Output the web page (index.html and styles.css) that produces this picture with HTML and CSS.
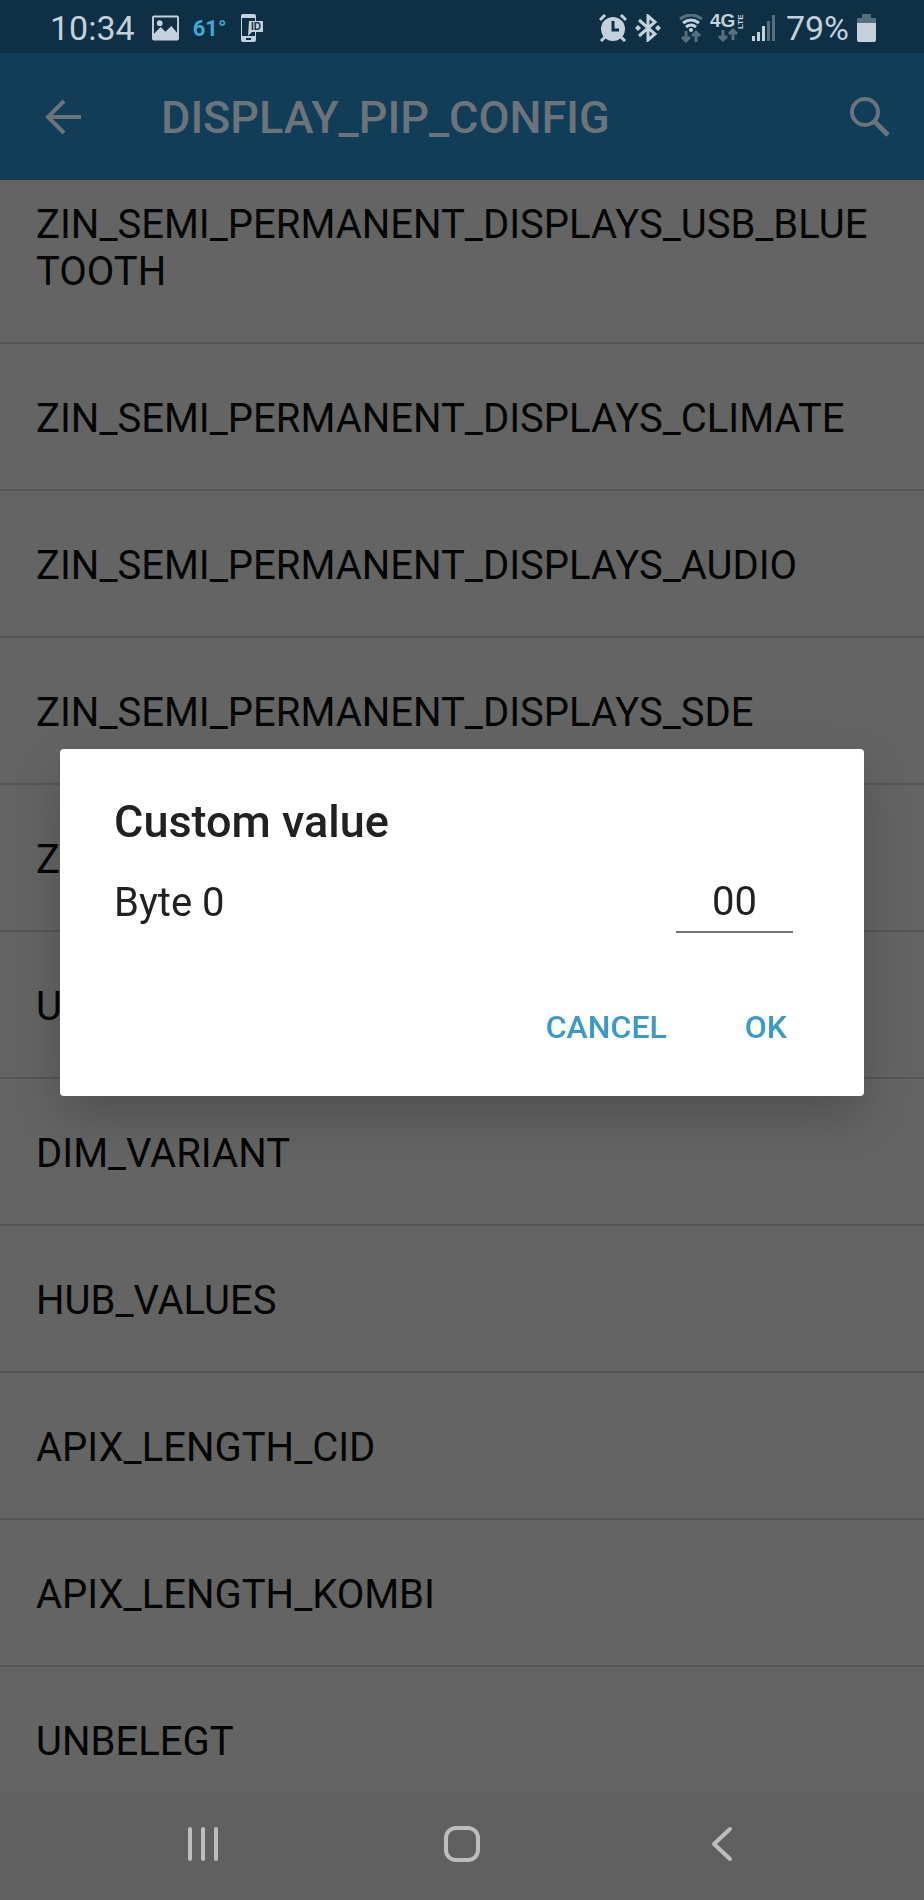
FILE: index.html
```html
<!DOCTYPE html>
<html lang="en">
<head>
  <meta charset="UTF-8">
  <meta name="viewport" content="width=device-width, initial-scale=1.0">
  <title>DISPLAY_PIP_CONFIG</title>
  <link rel="stylesheet" href="styles.css">
</head>
<body>
  <div class="screen">
    <div class="status-bar">
      <div class="status-left">
        <span class="clock">10:34</span>
        <svg class="icon-picture" width="27" height="26" viewBox="0 0 28 26">
          <path fill="currentColor" fill-rule="evenodd" d="M2 0h24a2 2 0 0 1 2 2v22a2 2 0 0 1-2 2H2a2 2 0 0 1-2-2V2a2 2 0 0 1 2-2zm0 2v17l7-7 5 5 6-6 6 7V2zm6 3a3 3 0 1 1 0 6 3 3 0 0 1 0-6z"/>
        </svg>
        <span class="temp">61°</span>
        <svg width="22" height="28" viewBox="0 0 22 28">
          <path fill="currentColor" fill-rule="evenodd" d="M2 0h11a2 2 0 0 1 2 2v24a2 2 0 0 1-2 2H2a2 2 0 0 1-2-2V2a2 2 0 0 1 2-2zm-1 4v18h13V4zm4 20v2h5v-2z"/>
          <path fill="currentColor" d="M8 7h14v11H11l-4 4z"/>
          <text class="icon-text" x="10" y="16" font-size="10" fill="#0f3044">ID</text>
        </svg>
      </div>
      <div class="status-right">
        <svg width="28" height="28" viewBox="0 0 28 28">
          <circle cx="14" cy="15" r="12" fill="currentColor"/>
          <path fill="none" stroke="currentColor" stroke-width="3" d="M1 6l5-5M22 1l5 5M6 23l-4 4M22 23l4 4"/>
          <path fill="none" stroke="#0f3044" stroke-width="3" d="M14 7v9h6"/>
        </svg>
        <svg class="icon-bluetooth" width="26" height="28" viewBox="0 0 26 28">
          <path fill="none" stroke="currentColor" stroke-width="3" d="M4 6l16 14-7 6V2l7 6L4 22"/>
          <path fill="currentColor" d="M0 14l3-3 3 3-3 3zM20 14l3-3 3 3-3 3z"/>
        </svg>
        <svg width="24" height="29" viewBox="0 0 24 29">
          <path class="dim" fill="none" stroke="currentColor" stroke-width="3" d="M1 5q11-8 22 0"/>
          <path fill="none" stroke="currentColor" stroke-width="3" d="M4 9q8-6 16 0M7 13q5-4 10 0"/>
          <circle cx="12" cy="16" r="2" fill="currentColor"/>
          <path class="dim" fill="none" stroke="currentColor" stroke-width="3" d="M7 17v9M3 23l4 4 4-4M17 28v-9M13 22l4-4 4 4"/>
        </svg>
        <svg class="icon-4g" width="36" height="40" viewBox="0 -6 36 40">
          <text class="icon-text" x="0" y="13" font-size="19" fill="currentColor">4G</text>
          <text class="icon-text" transform="translate(33 15) rotate(-90)" font-size="8" fill="currentColor">LTE</text>
          <path class="dim" fill="none" stroke="currentColor" stroke-width="3" d="M13 16v9M9 22l4 4 4-4M23 26v-9M19 20l4-4 4 4"/>
        </svg>
        <svg width="24" height="26" viewBox="0 0 24 26">
          <path fill="currentColor" d="M0 21h3v5H0zM5 17h3v9H5zM10 11h3v15h-3z"/>
          <path class="dim" fill="currentColor" d="M15 6h3v20h-3zM20 0h3v26h-3z"/>
        </svg>
        <span class="percent">79%</span>
        <svg width="19" height="28" viewBox="0 0 19 28">
          <path class="dim" fill="currentColor" d="M5 0h9v4h5v5H0V4h5z"/>
          <path fill="currentColor" d="M0 9h19v17a2 2 0 0 1-2 2H2a2 2 0 0 1-2-2z"/>
        </svg>
      </div>
    </div>

    <header class="app-bar">
      <button class="icon-button" aria-label="Back">
        <svg width="36" height="36" viewBox="0 0 36 36">
          <path fill="none" stroke="currentColor" stroke-width="4" d="M36 18H3M19 2L3 18l16 16"/>
        </svg>
      </button>
      <h1 class="app-title">DISPLAY_PIP_CONFIG</h1>
      <button class="icon-button" aria-label="Search">
        <svg width="40" height="40" viewBox="0 0 40 40">
          <circle cx="15" cy="15" r="13" fill="none" stroke="currentColor" stroke-width="4"/>
          <path fill="none" stroke="currentColor" stroke-width="5" d="M24 24l14 14"/>
        </svg>
      </button>
    </header>

    <ul class="list">
      <li class="list-item">ZIN_SEMI_PERMANENT_DISPLAYS_USB_BLUETOOTH</li>
      <li class="list-item">ZIN_SEMI_PERMANENT_DISPLAYS_CLIMATE</li>
      <li class="list-item">ZIN_SEMI_PERMANENT_DISPLAYS_AUDIO</li>
      <li class="list-item">ZIN_SEMI_PERMANENT_DISPLAYS_SDE</li>
      <li class="list-item">Z</li>
      <li class="list-item">U</li>
      <li class="list-item">DIM_VARIANT</li>
      <li class="list-item">HUB_VALUES</li>
      <li class="list-item">APIX_LENGTH_CID</li>
      <li class="list-item">APIX_LENGTH_KOMBI</li>
      <li class="list-item">UNBELEGT</li>
    </ul>

    <nav class="nav-bar">
      <button class="nav-button" aria-label="Recent apps">
        <svg width="36" height="36" viewBox="0 0 36 36">
          <path fill="none" stroke="currentColor" stroke-width="4" stroke-linecap="round" d="M5 3v30M18 3v30M31 3v30"/>
        </svg>
      </button>
      <button class="nav-button" aria-label="Home">
        <svg width="36" height="36" viewBox="0 0 36 36">
          <rect x="2" y="2" width="32" height="32" rx="10" fill="none" stroke="currentColor" stroke-width="4"/>
        </svg>
      </button>
      <button class="nav-button" aria-label="Back">
        <svg width="36" height="36" viewBox="0 0 36 36">
          <path fill="none" stroke="currentColor" stroke-width="4" stroke-linecap="round" stroke-linejoin="round" d="M27 3L11 18l16 15"/>
        </svg>
      </button>
    </nav>
  </div>

  <div class="dialog-layer">
    <form class="dialog" role="dialog" aria-labelledby="dialog-title">
      <h2 class="dialog-title" id="dialog-title">Custom value</h2>
      <div class="field">
        <label for="byte0">Byte 0</label>
        <input class="field-input" id="byte0" type="text" value="00" maxlength="2">
      </div>
      <div class="dialog-actions">
        <button class="dialog-button" type="button">CANCEL</button>
        <button class="dialog-button" type="button">OK</button>
      </div>
    </form>
  </div>
</body>
</html>
```
FILE: styles.css
```css
* {
  box-sizing: border-box;
}

body {
  margin: 0;
  font-family: Roboto, "Liberation Sans", sans-serif;
  font-size: 40px;
  line-height: 47px;
  background-color: #646464;
}

button {
  padding: 0;
  border: none;
  background: none;
  font-family: inherit;
  color: inherit;
  cursor: pointer;
}

svg {
  display: block;
  flex: none;
}

.screen {
  display: flex;
  flex-direction: column;
  height: 100vh;
  overflow: hidden;
}

/* status bar */
.status-bar {
  display: flex;
  flex: none;
  justify-content: space-between;
  height: 53px;
  padding: 3px 48px 0 50px;
  background-color: #0f3044;
  color: #c3d1dc;
}

.status-left,
.status-right {
  display: flex;
  align-items: center;
}

.clock,
.percent {
  font-size: 34px;
}

.icon-picture {
  margin: 0 14px 0 17px;
}

.icon-text {
  font-family: "Liberation Sans", sans-serif;
  font-weight: bold;
}

.temp {
  margin-right: 14px;
  font-size: 22px;
  font-weight: bold;
  color: #3fa9d6;
}

.icon-bluetooth {
  margin: 0 18px 0 8px;
}

.icon-4g {
  margin: 0 6px 0 7px;
}

.percent {
  margin: 0 8px 0 10px;
}

.dim {
  opacity: 0.4;
}

/* app bar */
.app-bar {
  display: flex;
  flex: none;
  align-items: center;
  height: 127px;
  padding: 0 34px 0 45px;
  background-color: #113d57;
  color: #6b747a;
}

.app-title {
  flex: 1;
  margin: 0 0 0 80px;
  padding-top: 2px;
  font-size: 45px;
  font-weight: 500;
}

/* list */
.list {
  flex: 1;
  min-height: 0;
  margin: 0;
  padding: 0;
  overflow: hidden;
  list-style: none;
}

.list-item {
  padding: 51px 36px 47px;
  border-bottom: 2px solid #575757;
  color: #050505;
  overflow-wrap: anywhere;
}

.list-item:first-child {
  padding-top: 21px;
}

/* navigation bar */
.nav-bar {
  display: flex;
  flex: none;
  justify-content: space-between;
  height: 108px;
  padding: 0 185px 4px;
  background-color: #606060;
  color: #bdbdbd;
}

/* dialog */
.dialog-layer {
  position: fixed;
  inset: 53px 0 108px;
  display: flex;
  align-items: center;
  justify-content: center;
  padding: 0 60px;
}

.dialog {
  width: 100%;
  padding: 46px 54px 21px;
  border-radius: 4px;
  background-color: #fff;
  box-shadow: 0 20px 50px rgba(0, 0, 0, 0.2);
  color: #212121;
}

.dialog-title {
  margin: 0;
  font-size: 45px;
  font-weight: 500;
  line-height: 54px;
}

.field {
  display: flex;
  align-items: center;
  justify-content: space-between;
  margin-top: 22px;
  padding-right: 17px;
}

.field-input {
  width: 117px;
  height: 62px;
  padding: 0;
  border: none;
  border-bottom: 2px solid #757575;
  border-radius: 0;
  background: none;
  font: inherit;
  color: inherit;
  text-align: center;
}

.dialog-actions {
  display: flex;
  justify-content: flex-end;
  gap: 32px;
  margin-top: 46px;
}

.dialog-button {
  height: 96px;
  padding: 0 23px;
  font-size: 32px;
  font-weight: 500;
  color: #3a9bcb;
}
```
